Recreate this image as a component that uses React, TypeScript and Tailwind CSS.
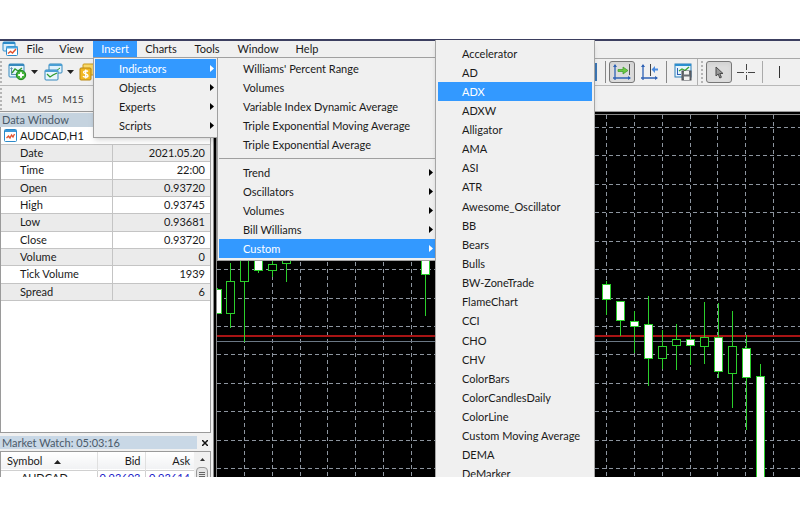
import type { ReactNode } from 'react'
import clsx from 'clsx'

const DATA_ROWS = [
  ['Date', '2021.05.20'],
  ['Time', '22:00'],
  ['Open', '0.93720'],
  ['High', '0.93745'],
  ['Low', '0.93681'],
  ['Close', '0.93720'],
  ['Volume', '0'],
  ['Tick Volume', '1939'],
  ['Spread', '6'],
]

const CUSTOM_ITEMS = [
  'Accelerator', 'AD', 'ADX', 'ADXW', 'Alligator', 'AMA', 'ASI', 'ATR', 'Awesome_Oscillator',
  'BB', 'Bears', 'Bulls', 'BW-ZoneTrade', 'FlameChart', 'CCI', 'CHO', 'CHV', 'ColorBars',
  'ColorCandlesDaily', 'ColorLine', 'Custom Moving Average', 'DEMA', 'DeMarker',
]

type Candle = { x: number; high: number; top: number; bottom: number; low: number; up?: boolean }

// chart coordinates, origin = top left of the plot
const CANDLES: Candle[] = [
  { x: 0, high: 173, top: 174, bottom: 199, low: 199 },
  { x: 13, high: 148, top: 166, bottom: 199, low: 213, up: true },
  { x: 27, high: 120, top: 130, bottom: 167, low: 227, up: true },
  { x: 41, high: 130, top: 140, bottom: 156, low: 158 },
  { x: 55, high: 140, top: 149, bottom: 156, low: 162, up: true },
  { x: 69, high: 130, top: 135, bottom: 149, low: 167, up: true },
  { x: 208, high: 130, top: 140, bottom: 160, low: 201 },
  { x: 222, high: 157, top: 158, bottom: 159, low: 160, up: true },
  { x: 389, high: 166, top: 169, bottom: 185, low: 200 },
  { x: 403, high: 186, top: 186, bottom: 206, low: 221 },
  { x: 417, high: 196, top: 206, bottom: 212, low: 238 },
  { x: 431, high: 181, top: 209, bottom: 244, low: 271 },
  { x: 445, high: 215, top: 231, bottom: 244, low: 254, up: true },
  { x: 459, high: 209, top: 224, bottom: 231, low: 255, up: true },
  { x: 473, high: 219, top: 224, bottom: 231, low: 250 },
  { x: 487, high: 187, top: 222, bottom: 232, low: 249, up: true },
  { x: 501, high: 188, top: 222, bottom: 257, low: 263 },
  { x: 515, high: 196, top: 231, bottom: 259, low: 293, up: true },
  { x: 529, high: 220, top: 233, bottom: 263, low: 315 },
  { x: 543, high: 249, top: 261, bottom: 380, low: 380 },
]

function AppIcon() {
  return (
    <svg width="17" height="16" viewBox="0 0 17 16" aria-hidden>
      <rect x="1" y="1" width="12" height="9" rx="1" fill="#d9eefb" stroke="#2c8ac9" />
      <path d="M1 2h12" stroke="#2c8ac9" strokeWidth="2" />
      <rect x="4.5" y="5.5" width="11" height="9" rx="1" fill="#fff" stroke="#2c8ac9" />
      <path d="M4 6.5h12" stroke="#4aa5de" strokeWidth="2" />
      <path d="m6 12.500 2.500-2 2 1.500 3.500-4" fill="none" stroke="#e2532e" strokeWidth="1.500" />
    </svg>
  )
}

function SymbolIcon() {
  return (
    <svg width="13" height="13" viewBox="0 0 13 13" aria-hidden>
      <rect x=".5" y=".5" width="12" height="12" rx="1" fill="#fff" stroke="#2c8ac9" />
      <path d="M1 2h11" stroke="#3b99d8" strokeWidth="2" />
      <path d="m2.500 9 2-2 1.500 2 1.500-3 1.500 2 1.500-3" fill="none" stroke="#e2532e" strokeWidth="1.300" />
    </svg>
  )
}

function NewChartIcon() {
  return (
    <svg width="19" height="18" viewBox="0 0 19 18" className="shrink-0" aria-hidden>
      <rect x="1" y="1" width="15" height="13" rx="1" fill="#e6f4fc" stroke="#3588bd" />
      <path d="M1 2h15" stroke="#3588bd" strokeWidth="2" />
      <path d="M3.500 12V5m-1 1 1-1.500L4.500 6M3 11.500h5" stroke="#5c8fae" fill="none" />
      <path d="m4 10 3-4 3 2 4-3" stroke="#2f9a2f" fill="none" strokeWidth="1.300" />
      <circle cx="13" cy="12" r="4.700" fill="#45b53c" stroke="#1b8419" />
      <path d="M13 9.200v5.600M10.200 12h5.600" stroke="#fff" strokeWidth="2" />
    </svg>
  )
}

function ProfilesIcon() {
  return (
    <svg width="19" height="18" viewBox="0 0 19 18" className="shrink-0" aria-hidden>
      <rect x="5" y="1" width="13" height="9" rx="1" fill="#dff1fc" stroke="#3588bd" />
      <path d="M5 2h13" stroke="#4a9fd4" strokeWidth="2" />
      <path d="m12 8 4-3" stroke="#2f9a2f" />
      <rect x="1" y="7" width="13" height="10" rx="1" fill="#e9f6fd" stroke="#3588bd" />
      <path d="M1 8h13" stroke="#4a9fd4" strokeWidth="2" />
      <path d="m3 11 3 3 3-2 4-2" stroke="#2f9a2f" fill="none" strokeWidth="1.300" />
    </svg>
  )
}

function MoneyIcon() {
  return (
    <svg width="16" height="18" viewBox="0 0 16 18" aria-hidden>
      <rect x="4" y="1" width="11" height="11" rx="1" fill="#f9d96a" stroke="#c99a1a" />
      <rect x="1" y="5" width="11" height="12" rx="1" fill="#f2b922" stroke="#b98712" />
      <path d="M9 8.500C8 7.300 4.500 7.500 4.500 9.300S9 10.800 9 12.800 5 14.500 4 13.200M6.700 6.500v9" stroke="#fff" fill="none" strokeWidth="1.300" />
    </svg>
  )
}

function ChartShiftIcon() {
  return (
    <svg width="20" height="18" viewBox="0 0 20 18" aria-hidden>
      <path d="M3 2v15M1 15h17" stroke="#2f62b5" strokeWidth="1.300" fill="none" />
      <path d="m1 4 2-3 2 3zM16 13l3 2-3 2z" fill="#2f62b5" />
      <path d="M17.500 1v11" stroke="#555" />
      <path d="M6 6.500h5V4l5 3.500-5 3.500V8.500H6z" fill="#6cc944" stroke="#3b9a28" strokeWidth=".7" />
    </svg>
  )
}

function AutoScrollIcon() {
  return (
    <svg width="20" height="18" viewBox="0 0 20 18" aria-hidden>
      <path d="M3 2v15M1 15h16" stroke="#2f62b5" strokeWidth="1.300" fill="none" />
      <path d="m1 4 2-3 2 3zM15 13l3 2-3 2z" fill="#2f62b5" />
      <path d="M10.500 1v12" stroke="#444" />
      <path d="M18 5.500h-3V3l-3.500 3.500L15 10V7.500h3z" fill="#4a8be0" />
    </svg>
  )
}

function TemplateIcon() {
  return (
    <svg width="18" height="18" viewBox="0 0 18 18" aria-hidden>
      <rect x="1" y="1" width="16" height="13" fill="#e6f4fc" stroke="#2c7fb8" />
      <path d="M1 2h16" stroke="#2c8fd0" strokeWidth="2" />
      <path d="M3.500 5v7M3 11.500h4" stroke="#2f62b5" />
      <path d="m5 8 3-2 3 1.500L15 4" stroke="#3aa52f" fill="none" strokeWidth="1.300" />
      <rect x="8" y="8" width="9" height="9" fill="#6a6e74" stroke="#4a4d52" />
      <path d="M10 8h5v3.500h-5zM10 13.500h5.500V17H10z" fill="#f1f1f1" />
    </svg>
  )
}

function CursorIcon() {
  return (
    <svg width="9" height="13" viewBox="0 0 9 13" aria-hidden>
      <path d="M1 1v9l2.200-2 1.600 4 1.600-.7L4.800 7.500H8z" fill="#9a9a9a" stroke="#4a4a4a" />
    </svg>
  )
}

function CrosshairIcon() {
  return (
    <svg width="18" height="18" viewBox="0 0 18 18" aria-hidden>
      <path d="M0 9.500h7M11 9.500h7M9.500 1v6M9.500 12v5M9 9.500h1" stroke="#444" />
    </svg>
  )
}

function Arrow({ className }: { className?: string }) {
  return (
    <svg width="4" height="7" viewBox="0 0 4 7" className={className} aria-hidden>
      <path d="M0 0l4 3.500L0 7z" fill="currentColor" />
    </svg>
  )
}

function DropArrow() {
  return (
    <svg width="7" height="4" viewBox="0 0 7 4" className="shrink-0" aria-hidden>
      <path d="M0 0h7L3.500 4z" fill="#222" />
    </svg>
  )
}

function MenuItem({ label, active, sub, className = 'h-[19px]' }: { label: string; active?: boolean; sub?: boolean; className?: string }) {
  return (
    <button
      type="button"
      role="menuitem"
      className={clsx(
        'flex w-full items-center justify-between whitespace-nowrap pl-6 pr-0.5 text-left',
        active ? 'bg-[#3399ff] text-white' : 'text-[#1a1a1a]',
        className,
      )}
    >
      {label}
      {sub && <Arrow className={active ? 'text-white' : 'text-black'} />}
    </button>
  )
}

function CustomMenu() {
  return (
    <div role="menu" className="absolute -top-[18px] left-full w-40 border-x border-[#a5a5a5] bg-[#f0f0f0] px-0.5 pt-1 shadow-md">
      <div className="grid h-[440px] auto-rows-fr">
        {CUSTOM_ITEMS.map((label) => (
          <MenuItem key={label} label={label} active={label === 'ADX'} className="h-auto" />
        ))}
      </div>
    </div>
  )
}

function IndicatorsMenu() {
  return (
    <div role="menu" className="absolute -top-px left-full w-[219px] border border-[#a0a0a0] bg-[#f0f0f0] pb-0.5 pl-px pt-px">
      <MenuItem label="Williams' Percent Range" />
      <MenuItem label="Volumes" />
      <MenuItem label="Variable Index Dynamic Average" />
      <MenuItem label="Triple Exponential Moving Average" />
      <MenuItem label="Triple Exponential Average" />
      <hr className="my-1 border-[#a0a0a0]" />
      <MenuItem label="Trend" sub />
      <MenuItem label="Oscillators" sub />
      <MenuItem label="Volumes" sub />
      <MenuItem label="Bill Williams" sub />
      <MenuItem label="Custom" sub active />
      <CustomMenu />
    </div>
  )
}

function InsertMenu() {
  return (
    <div role="menu" className="absolute left-0 top-full z-20 w-[125px] border border-[#a0a0a0] bg-[#f0f0f0] px-px pb-0.5 pt-px text-[#1a1a1a] shadow-md">
      <MenuItem label="Indicators" sub active />
      <MenuItem label="Objects" sub />
      <MenuItem label="Experts" sub />
      <MenuItem label="Scripts" sub />
      <IndicatorsMenu />
    </div>
  )
}

function MenuBar() {
  return (
    <nav className="mb-px flex h-[18px] items-stretch border-t-2 border-[#3c3f60] bg-[#f0f0f0] pl-0.5">
      <span className="flex w-[18px] items-center"><AppIcon /></span>
      <button type="button" className="w-[30px] text-center">File</button>
      <button type="button" className="w-[43px] text-center">View</button>
      <div className="relative flex">
        <button type="button" className="w-11 bg-[#3399ff] text-center text-white">Insert</button>
        <InsertMenu />
      </div>
      <button type="button" className="w-12 text-center">Charts</button>
      <button type="button" className="w-11 text-center">Tools</button>
      <button type="button" className="w-[58px] text-center">Window</button>
      <button type="button" className="w-10 text-center">Help</button>
    </nav>
  )
}

function Grip() {
  return <span className="h-[22px] w-[3px] shrink-0 border-l-2 border-dotted border-[#b5b5b5]" />
}

function ToolButton({ label, pressed, className, children }: { label: string; pressed?: boolean; className?: string; children: ReactNode }) {
  return (
    <button
      type="button"
      aria-label={label}
      className={clsx(
        'flex h-[22px] shrink-0 items-center justify-center',
        pressed && 'rounded-[3px] border border-[#777] bg-[#dcdcdc] shadow-inner',
        className,
      )}
    >
      {children}
    </button>
  )
}

function ToolBar() {
  return (
    <div className="flex h-7 items-center border-y border-b-[#b8b8b8] border-t-[#a8a8a8] bg-[#f0f0f0]">
      <Grip />
      <div className="flex w-[591px] shrink-0 items-center">
        <ToolButton label="New chart" className="ml-[5px] w-[30px] gap-1"><NewChartIcon /><DropArrow /></ToolButton>
        <ToolButton label="Profiles" className="ml-1.5 w-[30px] gap-1"><ProfilesIcon /><DropArrow /></ToolButton>
        <ToolButton label="Market" className="ml-[5px] w-4"><MoneyIcon /></ToolButton>
      </div>
      <span className="h-[18px] w-[3px] bg-[#3d77b5]" />
      <span className="ml-2 h-[22px] w-px bg-[#888]" />
      <ToolButton label="Chart shift" pressed className="ml-[3px] w-[26px]"><ChartShiftIcon /></ToolButton>
      <ToolButton label="Auto scroll" className="ml-[3px] w-6"><AutoScrollIcon /></ToolButton>
      <span className="ml-1 h-[22px] w-px bg-[#888]" />
      <ToolButton label="Templates" className="ml-1 w-6"><TemplateIcon /></ToolButton>
      <span className="ml-0.5 mr-[3px] h-full w-px bg-[#b0b0b0]" />
      <Grip />
      <ToolButton label="Cursor" pressed className="ml-0.5 w-[26px]"><CursorIcon /></ToolButton>
      <ToolButton label="Crosshair" className="ml-0.5 w-6"><CrosshairIcon /></ToolButton>
      <span className="ml-1 h-[22px] w-px bg-[#aaa]" />
      <ToolButton label="Vertical line" className="ml-1 w-6"><span className="h-3 w-px bg-[#333]" /></ToolButton>
    </div>
  )
}

function PeriodBar() {
  return (
    <div className="flex h-[26px] items-center border-b border-[#999] bg-[#f0f0f0] text-[10px] text-[#444]">
      <Grip />
      <button type="button" className="ml-0.5 w-[27px]">M1</button>
      <button type="button" className="w-[26px]">M5</button>
      <button type="button" className="w-[30px]">M15</button>
    </div>
  )
}

function DataWindow() {
  return (
    <section className="flex min-h-0 flex-1 flex-col">
      <h2 className="h-[14px] bg-[#c5d3df] pl-0.5 leading-[14px] text-[#4b5a69]">Data Window</h2>
      <div className="mr-0.5 flex-1 border-x border-b border-[#9a9a9a] bg-white">
        <div className="flex h-[17px] items-center gap-[3px] pl-[3px] text-[#1a1a1a]"><SymbolIcon />AUDCAD,H1</div>
        <table className="h-[157px] w-full border-collapse">
          <tbody>
            {DATA_ROWS.map(([name, value], i) => (
              <tr key={name} className={clsx('border-y border-[#c4c4c4]', i % 2 === 0 ? 'bg-[#ebebeb]' : 'bg-white')}>
                <th scope="row" className="w-[111px] border-r border-[#c4c4c4] p-0 pl-[19px] text-left font-normal leading-4">{name}</th>
                <td className="p-0 pr-[5px] text-right leading-4">{value}</td>
              </tr>
            ))}
          </tbody>
        </table>
      </div>
    </section>
  )
}

function MarketWatch() {
  return (
    <section className="mt-[3px] h-[41px] shrink-0 overflow-hidden">
      <header className="flex h-[13px] items-center justify-between">
        <h2 className="w-[198px] bg-[#c9d8e6] pl-0.5 leading-[13px] text-[#4b5a69]">Market Watch: 05:03:16</h2>
        <button type="button" aria-label="Close" className="w-4 text-center">
          <svg width="6" height="6" viewBox="0 0 6 6" className="mx-auto"><path d="m0 0 6 6M6 0 0 6" stroke="#111" strokeWidth="1.500" /></svg>
        </button>
      </header>
      <div className="mr-0.5 mt-0.5 flex items-start border border-b-0 border-[#9a9a9a] bg-white">
        <table className="w-[193px] table-fixed border-collapse">
          <thead>
            <tr className="h-[18px] border-b border-[#d0d0d0] bg-gradient-to-b from-white to-[#f1f2f4]">
              <th className="w-24 border-r border-[#e0e0e0] p-0 pl-1.5 text-left font-normal">
                Symbol
                <svg width="7" height="4" viewBox="0 0 7 4" className="ml-3 inline-block align-middle" aria-hidden><path d="M0 4h7L3.500 0z" fill="#222" /></svg>
              </th>
              <th className="w-12 border-r border-[#e0e0e0] p-0 pr-1 text-right font-normal">Bid</th>
              <th className="p-0 pr-1 text-right font-normal">Ask</th>
            </tr>
          </thead>
          <tbody className="leading-[14px]">
            <tr>
              <td className="border-r border-[#d0d0d0] p-0 pl-5">AUDCAD</td>
              <td className="border-r border-[#d0d0d0] p-0 pr-1 text-right text-[#1a1ac8]">0.93603</td>
              <td className="p-0 pr-1 text-right text-[#1a1ac8]">0.93614</td>
            </tr>
          </tbody>
        </table>
        <div className="flex flex-1 flex-col items-center bg-[#f0f0f0] pt-1.5">
          <svg width="5" height="3" viewBox="0 0 5 3" className="shrink-0" aria-hidden><path d="M0 3h5L2.500 0z" fill="#333" /></svg>
          <span className="mt-1.5 flex h-6 w-3 flex-col items-center gap-px rounded-sm border border-[#999] bg-[#e4e4e4] pt-1">
            <span className="h-px w-1.5 bg-[#666]" />
            <span className="h-px w-1.5 bg-[#666]" />
            <span className="h-px w-1.5 bg-[#666]" />
          </span>
        </div>
      </div>
    </section>
  )
}

function PriceChart() {
  const columns = Array.from({ length: 60 }, (_, i) => Math.round(i * 27.86) - 0.5)
  const rows = Array.from({ length: 40 }, (_, i) => Math.round(12 + i * 28.42) + 0.5)
  return (
    <svg width="100%" height="100%" className="block" role="img" aria-label="AUDCAD,H1">
      <g stroke="#8d959f" strokeDasharray="4 3">
        {columns.map((x) => <line key={x} x1={x} x2={x} y1="0" y2="100%" />)}
        {rows.map((y) => <line key={y} x1="0" x2="100%" y1={y} y2={y} />)}
      </g>
      <line x1="0" x2="100%" y1="221" y2="221" stroke="#a81414" strokeWidth="2" />
      <line x1="0" x2="100%" y1="226.5" y2="226.5" stroke="#6b7885" />
      {CANDLES.map(({ x, high, top, bottom, low, up }) => (
        <g key={x} stroke="#2bcf2b">
          <line x1={x + 0.5} x2={x + 0.5} y1={high} y2={low} />
          <rect x={x - 3.5} y={top + 0.5} width="8" height={Math.max(bottom - top - 1, 1)} fill={up ? '#000' : '#fff'} />
        </g>
      ))}
    </svg>
  )
}

export default function App() {
  return (
    <div className="h-screen bg-white pb-[30px] pt-[39px] font-[Lato,'Open_Sans',sans-serif] text-[11px] leading-4 text-[#1a1a1a]">
      <div className="flex h-full flex-col overflow-hidden bg-[#f0f0f0]">
        <MenuBar />
        <ToolBar />
        <PeriodBar />
        <main className="flex min-h-0 flex-1">
          <aside className="flex w-[214px] shrink-0 flex-col border-r border-[#8a8a8a] bg-[#f0f0f0] pt-px">
            <DataWindow />
            <MarketWatch />
          </aside>
          <div className="min-w-0 flex-1 border-l-2 border-t-2 border-black">
            <div className="h-full border-l border-t border-[#888] bg-black">
              <PriceChart />
            </div>
          </div>
        </main>
      </div>
    </div>
  )
}
